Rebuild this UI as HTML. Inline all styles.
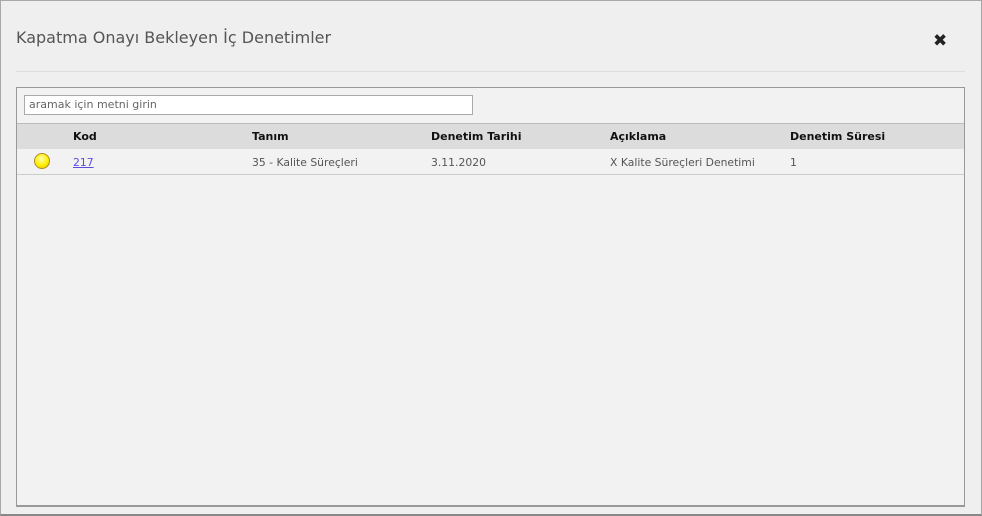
<!DOCTYPE html>
<html><head><meta charset="utf-8"><style>
html,body{margin:0;padding:0;width:982px;height:516px;overflow:hidden;background:#f0f0f0;}
body{font-family:"DejaVu Sans","Liberation Sans",sans-serif;position:relative;}
.outer{position:absolute;left:0;top:0;width:980px;height:513px;border:1px solid #a8a8a8;border-bottom:2px solid #888;background:#efefef;}
.title{position:absolute;left:15px;top:27px;font-size:16px;color:#555;font-family:"DejaVu Sans",sans-serif;}
.close{position:absolute;left:932px;top:30px;font-size:17px;font-weight:bold;color:#222;}
.hr{position:absolute;left:15px;top:70px;width:949px;height:1px;background:#ddd;}
.panel{position:absolute;left:15px;top:86px;width:947px;height:417px;border:1px solid #999;border-bottom:2px solid #999;background:#f2f2f2;}
.search{position:absolute;left:7px;top:7px;width:443px;height:18px;border:1px solid #aaa;background:#fff;font-size:11px;color:#666;line-height:18px;padding-left:4px;box-sizing:content-box;}
.hdr{position:absolute;left:0;top:35px;width:947px;height:25px;background:#dcdcdc;border-top:1px solid #bbb;}
.row{position:absolute;left:0;top:61px;width:947px;height:25px;border-bottom:1px solid #ccc;}
.c{position:absolute;top:7px;font-size:10.8px;white-space:nowrap;}
.hdr .c{font-weight:bold;color:#111;top:6px;font-size:11px;}
.row .c{color:#555;}
a{color:#5a4ee0;text-decoration:underline;}
.dot{position:absolute;left:17px;top:4px;width:14px;height:14px;border-radius:50%;border:1px solid #b08a20;background:radial-gradient(circle at 45% 35%,#ffffb0,#ffee00 55%,#e0c000);}
</style></head><body>
<div class="outer">
<div class="title">Kapatma Onayı Bekleyen İç Denetimler</div>
<div class="close">✖</div>
<div class="hr"></div>
<div class="panel">
<div class="search">aramak için metni girin</div>
<div class="hdr">
<span class="c" style="left:56px">Kod</span>
<span class="c" style="left:235px">Tanım</span>
<span class="c" style="left:414px">Denetim Tarihi</span>
<span class="c" style="left:593px">Açıklama</span>
<span class="c" style="left:773px">Denetim Süresi</span>
</div>
<div class="row">
<div class="dot"></div>
<span class="c" style="left:56px"><a>217</a></span>
<span class="c" style="left:235px">35 - Kalite Süreçleri</span>
<span class="c" style="left:414px">3.11.2020</span>
<span class="c" style="left:593px">X Kalite Süreçleri Denetimi</span>
<span class="c" style="left:773px">1</span>
</div>
</div>
</div>
</body></html>
